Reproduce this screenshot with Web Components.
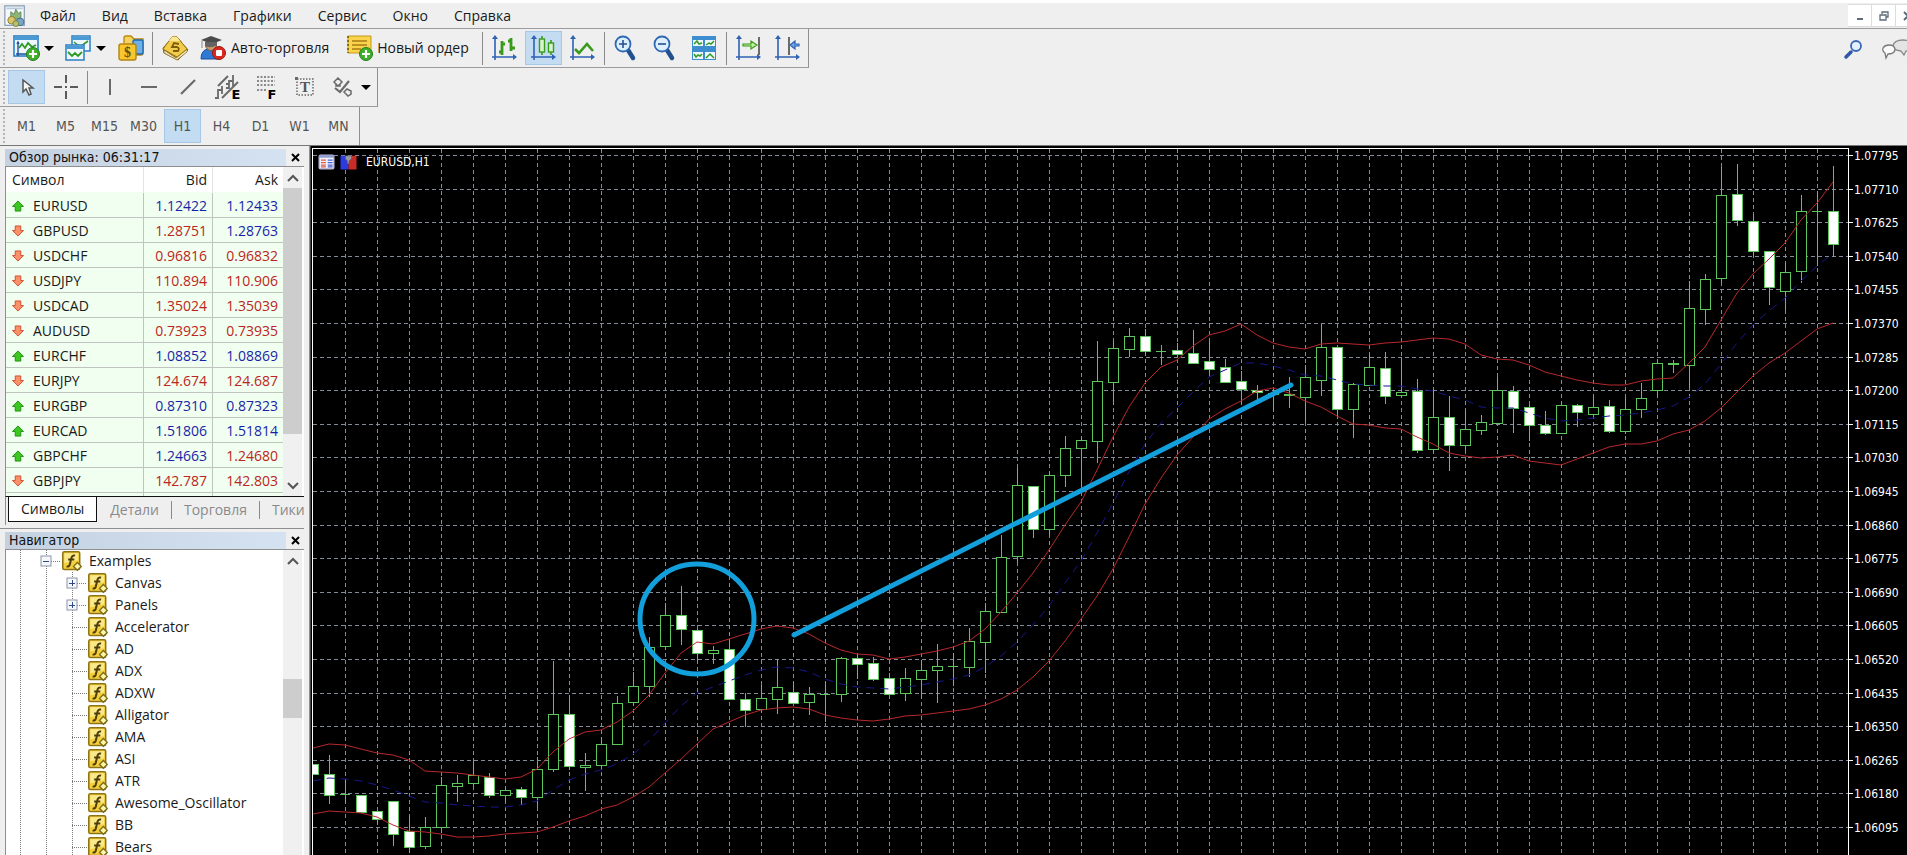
<!DOCTYPE html>
<html lang="ru">
<head>
<meta charset="utf-8">
<title>EURUSD,H1</title>
<style>
  html, body { height: 100%; margin: 0; }
  body {
    overflow: hidden;
    font: 14px/20px "Open Sans", "Noto Sans", sans-serif;
    color: #1a1a1a;
    background: #efefef;
  }
</style>
</head>
<body>
<mt-terminal></mt-terminal>

<script>
const AXES = `
  <path d="M4 3v22M1 22h23" stroke="#2f62b5" stroke-width="1.6" fill="none"/>
  <path d="M4 0l3 4H1zM26 22l-4-3v6z" fill="#2f62b5"/>`;

const PLUS_BADGE = `
  <circle cx="20" cy="19" r="6.5" fill="#3fae2a" stroke="#23801a"/>
  <path d="M20 15v8M16 19h8" stroke="#fff" stroke-width="2.2"/>`;

const ICONS = {
  app: `
    <rect x="1" y="1" width="23" height="23" fill="#f4f8fb" stroke="#8ba0b4" stroke-width="1.5"/>
    <path d="M3 4h19" stroke="#b9cadb" stroke-width="2"/>
    <path d="M8 16V8l4 3 2-6 3 5 3-2v9z" fill="#8db67a" stroke="#5a8450"/>
    <circle cx="9" cy="18" r="4.5" fill="#d8c46a" stroke="#8a7626"/>
    <circle cx="19" cy="20" r="4.5" fill="#7aa4c8" stroke="#3f6689"/>
    <circle cx="14" cy="22" r="3.5" fill="#b2bf74" stroke="#6e7a35"/>`,
  newChart: `
    <rect x="1" y="1" width="24" height="20" fill="#eef7fd" stroke="#2b7fc2" stroke-width="1.6"/>
    <path d="M1 2h24v3H1z" fill="#4a9ad6"/>
    <path d="M5 8v13M3 19h14M4 9l1-2 1 2" stroke="#1d4f9e" stroke-width="1.4" fill="none"/>
    <path d="M6 13l3-4 3 4 3-5 4 4 4-2" stroke="#2f9b24" stroke-width="1.8" fill="none"/>${PLUS_BADGE}`,
  profiles: `
    <rect x="7" y="1" width="18" height="15" fill="#eef7fd" stroke="#2b7fc2" stroke-width="1.5"/>
    <path d="M7 2h18v3H7z" fill="#4a9ad6"/>
    <path d="M9 7l6 5 8-6" stroke="#2f9b24" stroke-width="1.6" fill="none"/>
    <rect x="1" y="10" width="18" height="15" fill="#eef7fd" stroke="#2b7fc2" stroke-width="1.5"/>
    <path d="M1 11h18v3H1z" fill="#4a9ad6"/>
    <path d="M3 17l4 4 3-3 3 3 4-4" stroke="#2f9b24" stroke-width="1.8" fill="none"/>`,
  symbols: `
    <path d="M6 8V3q0-2 2-2h5l3 3h9v14q0 2-2 2h-8" fill="#f5d35e" stroke="#b88a13" stroke-width="1.4"/>
    <rect x="15" y="5" width="10" height="14" rx="1.5" fill="#6bb2ec" stroke="#2268ac" stroke-width="1.4"/>
    <rect x="1" y="9" width="17" height="16" rx="2" fill="#f8c62f" stroke="#b58410" stroke-width="1.4"/>
    <text x="9.5" y="22" font-size="14" font-weight="bold" text-anchor="middle" fill="#6b4f08" font-family="Liberation Serif, serif">$</text>`,
  book: `
    <path d="M1 13L11 2q2-1 4 0l11 13-10 10L2 18z" fill="#a8821c" stroke="#7f5f12"/>
    <path d="M2 15l12 8 11-9v3l-10 8L2 18z" fill="#efe7c6" stroke="#8f7425" stroke-width=".8"/>
    <path d="M1 14L10 2q3-1 5 0l10 12-10 8z" fill="#f2cd4b" stroke="#9c7815"/>
    <path d="M10 2q3-1 5 0l3 4-11 0z" fill="#fbe892"/>
    <path d="M17 9l-5-1-2 4 5 0q3 1 1 4l-5 0" fill="none" stroke="#7d5d0c" stroke-width="1.8"/>`,
  autoTrade: `
    <path d="M1 24q0-9 7-10h6q5 1 6 10z" fill="#2f79d4" stroke="#1c4f9b"/>
    <circle cx="11" cy="10" r="5.5" fill="#c89b6c" stroke="#7b5a38"/>
    <path d="M1 5l10-4 11 4-10 4z" fill="#4b4b4b"/>
    <path d="M5 7v4q6 3 12-1V7" fill="#636363"/>
    <path d="M2 6v7" stroke="#888"/>
    <circle cx="19" cy="18" r="6.5" fill="#d9281f" stroke="#9c1712"/>
    <rect x="16" y="15" width="6" height="6" rx="1" fill="#fff"/>`,
  newOrder: `
    <path d="M2 1h23v17H2z" fill="#f9d34c" stroke="#c69a1c"/>
    <path d="M2 1v17" stroke="#8b6d18" stroke-width="2" stroke-dasharray="2 2"/>
    <path d="M6 6h15M6 10h15M6 14h9" stroke="#a67c14" stroke-width="1.6"/>${PLUS_BADGE}`,
  bars: `${AXES}
    <path d="M11 6v14M8 17h3M11 9h3M20 3v13M17 6h3M20 13h4" stroke="#3a9a1b" stroke-width="2.8"/>`,
  candles: `${AXES}
    <path d="M12 1v19M21 5v15" stroke="#3a9a1b" stroke-width="1.6"/>
    <rect x="9.5" y="4" width="5" height="13" fill="#d6f5cc" stroke="#3a9a1b" stroke-width="1.4"/>
    <rect x="18.5" y="8" width="5" height="9" fill="#d6f5cc" stroke="#3a9a1b" stroke-width="1.4"/>`,
  line: `${AXES}
    <path d="M6 14l4 4 8-9 6 7" stroke="#3a9a1b" stroke-width="2.6" fill="none"/>`,
  zoomIn: `
    <path d="M15 15l5 8" stroke="#24508f" stroke-width="4.5" stroke-linecap="round"/>
    <circle cx="10" cy="9" r="7.5" fill="#dcefff" stroke="#2f68b4" stroke-width="1.8"/>
    <path d="M10 5v8M6 9h8" stroke="#24508f" stroke-width="1.6"/>`,
  zoomOut: `
    <path d="M15 15l5 8" stroke="#24508f" stroke-width="4.5" stroke-linecap="round"/>
    <circle cx="10" cy="9" r="7.5" fill="#dcefff" stroke="#2f68b4" stroke-width="1.8"/>
    <path d="M6 9h8" stroke="#24508f" stroke-width="1.6"/>`,
  tile: `
    <path d="M1 1h24v24H1z" fill="#3c8ed0"/>
    <path d="M2 5h10v6H2zM14 5h10v6H14zM2 17h10v7H2zM14 17h10v7H14z" fill="#eef7fd"/>
    <path d="M3 9l3-3 2 3 3-1M15 10l3-2 2 1 3-3M3 19l2 3 2-2 2 1 2-2M15 23l4-4 4 4" stroke="#2f9b24" stroke-width="1.5" fill="none"/>`,
  autoScroll: `${AXES}
    <path d="M24 2v18" stroke="#333" stroke-width="1.4"/>
    <path d="M8 9h8V6l6 4-6 4v-3H8z" fill="#baf09c" stroke="#3a9a1b" stroke-width="1.2"/>`,
  shift: `${AXES}
    <path d="M15 2v18" stroke="#333" stroke-width="1.4"/>
    <path d="M25 9h-4V6l-5 4 5 4v-3h4z" fill="#6ba5e6" stroke="#2f62b5" stroke-width="1.2"/>`,
  cursor: `
    <path d="M9 6v12l3-3 3 6 2-1-2-6h4z" fill="#f6f6f6" stroke="#555" stroke-width="1.5"/>`,
  crosshair: `
    <path d="M13 1v8M13 17v8M1 13h8M17 13h8M12 13h2" stroke="#5a5a5a" stroke-width="2"/>`,
  vline: `<path d="M13 5v16" stroke="#6a6a6a" stroke-width="2"/>`,
  hline: `<path d="M5 13h16" stroke="#6a6a6a" stroke-width="2"/>`,
  trend: `<path d="M6 20L20 6" stroke="#6a6a6a" stroke-width="2.2"/>`,
  channel: `
    <path d="M4 12L14 2M8 24L24 8" stroke="#6a6a6a" stroke-width="2"/>
    <path d="M1 24h3v-8h4v-4M8 16v4M12 14h3V7h4V1M19 7v5M15 10h-3" stroke="#6a6a6a" stroke-width="1.8" fill="none"/>
    <text x="22" y="25" font-size="13" font-weight="bold" text-anchor="middle" fill="#000" font-family="DejaVu Sans, sans-serif">E</text>`,
  fibo: `
    <path d="M4 3h18M4 7h18M4 11h18M4 16h10" stroke="#6a6a6a" stroke-width="1.5" stroke-dasharray="2 1.5"/>
    <text x="19" y="25" font-size="13" font-weight="bold" text-anchor="middle" fill="#000" font-family="DejaVu Sans, sans-serif">F</text>`,
  text: `
    <rect x="5" y="5" width="16" height="16" fill="none" stroke="#6a6a6a" stroke-width="1.5" stroke-dasharray="1.5 1.5"/>
    <path d="M3 3h3v3H3z" fill="#6a6a6a"/>
    <text x="13" y="18" font-size="15" font-weight="bold" text-anchor="middle" fill="#555" font-family="Liberation Serif, serif">T</text>`,
  shapes: `
    <path d="M4 8l4-4 4 4-4 4zM6 10v2h4v-2" fill="none" stroke="#6a6a6a" stroke-width="1.5"/>
    <path d="M5 14l5 4 9-11" stroke="#6a6a6a" stroke-width="2.2" fill="none"/>
    <path d="M14 18l3-3 4 2v3l-3 2z" fill="none" stroke="#6a6a6a" stroke-width="1.5"/>`,
  search: `
    <path d="M9 16l-5 5" stroke="#2f58a8" stroke-width="3.5" stroke-linecap="round"/>
    <circle cx="14" cy="10" r="5" fill="#e3efff" stroke="#3a66b4" stroke-width="1.8"/>`,
  chat: `
    <path d="M24 15l-2 4-3-4q-8-1-8-5 1-6 10-6t10 6-7 5z" fill="#e4e4e4" stroke="#8a8a8a" stroke-width="1.3"/>
    <path d="M6 18l-2 4-1-5q-3-2-2-5 2-3 6-3 6 0 6 5-1 4-7 4z" fill="#fafafa" stroke="#7a7a7a" stroke-width="1.3"/>`,
  up: `<path d="M13 2l12 12h-6v10H7V14H1z" fill="#3cc81e" stroke="#1f8a12" stroke-width="2"/>`,
  down: `<path d="M13 24L1 12h6V2h12v10h6z" fill="#fa9168" stroke="#d0492c" stroke-width="2"/>`,
  indicator: `
    <rect x="1" y="1" width="22" height="23" rx="2" fill="#f3cf3c" stroke="#8f7417" stroke-width="2"/>
    <path d="M3 3h18v9L3 16z" fill="#fae98a"/>
    <path d="M17 6q-4-1-5 4l-2 8q-1 3-4 2M8 11h8" fill="none" stroke="#4f3d06" stroke-width="2.6"/>
    <path d="M20 15l5 5-5 5-5-5z" fill="#fbf6a8" stroke="#7d6a16" stroke-width="1.8"/>`,
  quotes: `
    <rect x="1" y="2" width="24" height="22" rx="2" fill="#f1f1fb" stroke="#b9b9dd" stroke-width="2"/>
    <path d="M1 2h24v4H1z" fill="#8f9bd0"/>
    <path d="M4 10h8M4 14h8M4 18h8M4 21h8" stroke="#e05a4a" stroke-width="2"/>
    <path d="M15 10h8M15 14h8M15 18h8M15 21h8" stroke="#4a63d0" stroke-width="2"/>`,
  depth: `
    <path d="M0 3h10l3 8v14H0z" fill="#2b3be0"/>
    <path d="M26 3H16l-3 8v14h13z" fill="#c92c28"/>
    <path d="M8 3h10v5l-4 3v5h-3v-5L8 8z" fill="#9a9aa2" stroke="#555"/>`,
};

class MtIcon extends HTMLElement {
  connectedCallback() {
    this.attachShadow({ mode: "open" }).innerHTML = `
      <style>
        :host { display: block; flex: none; width: 26px; height: 26px; }
        svg { display: block; width: 100%; height: 100%; overflow: visible; }
      </style>
      <svg viewBox="0 0 26 26" aria-hidden="true">${ICONS[this.getAttribute("name")]}</svg>`;
  }
}
customElements.define("mt-icon", MtIcon);

class MtMenuBar extends HTMLElement {
  connectedCallback() {
    this.attachShadow({ mode: "open" }).innerHTML = `
      <style>
        :host {
          display: flex;
          justify-content: space-between;
          height: 25px;
          border-top: 3px solid #fff;
          border-bottom: 1px solid #9c9c9c;
        }
        nav { display: flex; align-items: center; padding-left: 4px; }
        mt-icon { width: 22px; height: 22px; margin-right: 4px; }
        button {
          font: inherit; color: inherit;
          background: none; border: 0; padding: 0 10px; margin-right: 6px;
        }
        .window { display: flex; width: 59px; overflow: hidden; }
        .window button {
          flex: none;
          display: grid; place-items: center;
          width: 24px; margin: 1px 0; padding: 0;
          background: #fff; border: 1px solid #dcdcdc; border-left-width: 0;
        }
        .window svg { width: 10px; height: 10px; fill: none; stroke: #5d6b7a; stroke-width: 2; }
      </style>
      <nav>
        <mt-icon name="app"></mt-icon>
        ${["Файл", "Вид", "Вставка", "Графики", "Сервис", "Окно", "Справка"]
          .map((t) => `<button>${t}</button>`).join("")}
      </nav>
      <div class="window">
        <button aria-label="Свернуть"><svg viewBox="0 0 10 10"><path d="M2 8h6"/></svg></button>
        <button aria-label="Восстановить"><svg viewBox="0 0 10 10"><path d="M3 3V1h6v5H7M1 4h6v5H1z" stroke-width="1.3"/></svg></button>
        <button aria-label="Закрыть"><svg viewBox="0 0 10 10"><path d="M1 1l8 8M9 1L1 9"/></svg></button>
      </div>`;
  }
}
customElements.define("mt-menu-bar", MtMenuBar);

class MtToolbar extends HTMLElement {
  connectedCallback() {
    this.attachShadow({ mode: "open" }).innerHTML = `
      <style>
        :host {
          display: flex;
          align-items: center;
          gap: 2px;
          box-sizing: border-box;
          width: max-content;
          height: 39px;
          padding: 0 2px 0 3px;
          border-right: 1px solid #8f8f8f;
          border-bottom: 1px solid #9c9c9c;
        }
        .grip { height: 34px; margin-right: 1px; border-left: 2px dotted #b5b5b5; }
      </style>
      <span class="grip"></span><slot></slot>`;
  }
}
customElements.define("mt-toolbar", MtToolbar);

class MtSeparator extends HTMLElement {
  connectedCallback() {
    this.attachShadow({ mode: "open" }).innerHTML = `
      <style>
        :host { display: block; width: 1px; height: 33px; margin: 0 1px; background: #8a8a8a; }
      </style>`;
  }
}
customElements.define("mt-separator", MtSeparator);

// <mt-tool icon="..." label="..." menu active>caption</mt-tool>
class MtTool extends HTMLElement {
  connectedCallback() {
    const icon = this.getAttribute("icon");
    const caption = this.textContent.trim();
    this.attachShadow({ mode: "open" }).innerHTML = `
      <style>
        :host { display: block; }
        button {
          display: flex; align-items: center; justify-content: center; gap: 5px;
          box-sizing: border-box;
          min-width: 37px; height: 34px; padding: 0 4px;
          font: inherit; color: inherit;
          background: none; border: 1px solid transparent;
        }
        .captioned { padding-right: 9px; }
        :host([active]) button { background: #c3dcf1; border-color: #a6c8e6; }
        .arrow {
          margin-right: -1px;
          border: 5px solid transparent; border-bottom: 0; border-top-color: #000;
        }
      </style>
      <button class="${icon && caption ? "captioned" : ""}"
              aria-label="${this.getAttribute("label") || caption}"
              aria-pressed="${this.hasAttribute("active")}">
        ${icon ? `<mt-icon name="${icon}"></mt-icon>` : ""}
        <slot></slot>
        ${this.hasAttribute("menu") ? `<span class="arrow"></span>` : ""}
      </button>`;
  }
}
customElements.define("mt-tool", MtTool);

class MtPanel extends HTMLElement {
  connectedCallback() {
    this.attachShadow({ mode: "open" }).innerHTML = `
      <style>
        :host { display: flex; flex-direction: column; min-height: 0; }
        header {
          display: flex; align-items: center; flex: none;
          height: 17px; margin-top: 3px;
          font: 14px/17px "DejaVu Sans Condensed", "DejaVu Sans", sans-serif;
        }
        h2 {
          flex: 1; margin: 0; padding-left: 4px;
          font: inherit; color: #111;
          background: linear-gradient(90deg, #c3d1e1, #d5e2f2);
        }
        button { width: 18px; padding: 0; border: 0; background: none; }
        svg { display: block; margin: auto; width: 9px; height: 9px; stroke: #000; stroke-width: 2; }
        .body {
          display: flex; flex: 1; min-height: 0;
          background: #fff;
          border: 1px solid #8f8f8f; border-right: 0; border-bottom: 0;
        }
        .view { flex: 1; min-width: 0; overflow: hidden; }
      </style>
      <header>
        <h2>${this.getAttribute("heading")}</h2>
        <button aria-label="Закрыть"><svg viewBox="0 0 9 9"><path d="M1 1l7 7M8 1L1 8"/></svg></button>
      </header>
      <div class="body">
        <div class="view"><slot></slot></div>
        <slot name="scroll"></slot>
      </div>
      <slot name="footer"></slot>`;
  }
}
customElements.define("mt-panel", MtPanel);

// before / size / after: how the track divides between gap, thumb and gap
class MtScrollbar extends HTMLElement {
  connectedCallback() {
    const part = (n) => this.getAttribute(n);
    this.attachShadow({ mode: "open" }).innerHTML = `
      <style>
        :host {
          display: flex; flex-direction: column; flex: none;
          width: 19px; margin-right: 2px; background: #f0f0f0;
        }
        button { flex: none; height: 21px; padding: 0; border: 0; background: none; }
        svg { display: block; margin: auto; width: 12px; height: 8px; fill: none; stroke: #555; stroke-width: 2; }
        .before { flex: ${part("before")}; }
        .thumb { flex: ${part("size")}; background: #cdcdcd; }
        .after { flex: ${part("after")}; }
      </style>
      <button aria-label="Вверх"><svg viewBox="0 0 12 8"><path d="M1 7l5-5 5 5"/></svg></button>
      <span class="before"></span><span class="thumb"></span><span class="after"></span>
      ${this.hasAttribute("open-end") ? "" : `<button aria-label="Вниз"><svg viewBox="0 0 12 8"><path d="M1 1l5 5 5-5"/></svg></button>`}`;
  }
}
customElements.define("mt-scrollbar", MtScrollbar);

// symbol, bid, ask, symbol direction, bid direction, ask direction
const QUOTES = [
  ["EURUSD", "1.12422", "1.12433", "up", "up", "up"],
  ["GBPUSD", "1.28751", "1.28763", "down", "down", "up"],
  ["USDCHF", "0.96816", "0.96832", "down", "down", "down"],
  ["USDJPY", "110.894", "110.906", "down", "down", "down"],
  ["USDCAD", "1.35024", "1.35039", "down", "down", "down"],
  ["AUDUSD", "0.73923", "0.73935", "down", "down", "down"],
  ["EURCHF", "1.08852", "1.08869", "up", "up", "up"],
  ["EURJPY", "124.674", "124.687", "down", "down", "down"],
  ["EURGBP", "0.87310", "0.87323", "up", "up", "up"],
  ["EURCAD", "1.51806", "1.51814", "up", "up", "up"],
  ["GBPCHF", "1.24663", "1.24680", "up", "up", "down"],
  ["GBPJPY", "142.787", "142.803", "down", "down", "down"],
];

class MtQuotes extends HTMLElement {
  connectedCallback() {
    this.attachShadow({ mode: "open" }).innerHTML = `
      <style>
        :host { display: block; height: 329px; overflow: hidden; background: #f0fff0; }
        table { width: 100%; border-collapse: separate; border-spacing: 0; table-layout: fixed; }
        th, td {
          box-sizing: border-box; height: 25px; padding: 1px 5px 0;
          font-weight: normal; text-align: right; line-height: 20px;
          border-bottom: 1px solid #bfc4bf; border-right: 1px solid #bfc4bf;
        }
        thead th { height: 26px; background: #fff; border-bottom-color: #f0fff0; border-right-color: #e3e3e3; }
        th:first-child { width: 138px; text-align: left; padding-left: 6px; }
        th:nth-child(2) { width: 69px; }
        tr > :last-child { border-right: 0; }
        .symbol { display: flex; align-items: center; gap: 9px; }
        mt-icon { width: 12px; height: 12px; }
        .up { color: #1a1fa8; }
        .down { color: #bd2520; }
      </style>
      <table>
        <thead><tr><th scope="col">Символ</th><th scope="col">Bid</th><th scope="col">Ask</th></tr></thead>
        <tbody>
          ${QUOTES.map(([symbol, bid, ask, dir, bidDir, askDir]) => `
            <tr>
              <th scope="row"><span class="symbol"><mt-icon name="${dir}"></mt-icon>${symbol}</span></th>
              <td class="${bidDir}">${bid}</td>
              <td class="${askDir}">${ask}</td>
            </tr>`).join("")}
          <tr><th></th><td></td><td></td></tr>
        </tbody>
      </table>`;
  }
}
customElements.define("mt-quotes", MtQuotes);

class MtTabs extends HTMLElement {
  connectedCallback() {
    this.attachShadow({ mode: "open" }).innerHTML = `
      <style>
        :host {
          display: flex; flex: none; overflow: hidden;
          height: 28px; padding-left: 2px;
          border-top: 1px solid #111; border-left: 1px solid #8f8f8f;
        }
        button {
          flex: none; display: flex; align-items: center; gap: 12px;
          height: 25px; padding: 0 12px 0 0;
          font: inherit; color: #8a8a8a;
          background: none; border: 0;
        }
        button::before { content: ""; height: 18px; border-left: 1px solid #8a8a8a; }
        button:nth-of-type(2)::before { border-color: transparent; }
        button:last-of-type { padding-right: 0; }
        [aria-selected="true"] {
          padding: 0 12px; color: #1a1a1a;
          background: #fff; border: 1px solid #111; border-top: 0;
        }
        [aria-selected="true"]::before { display: none; }
      </style>
      <button role="tab" aria-selected="true">Символы</button>
      <button role="tab">Детали</button>
      <button role="tab">Торговля</button>
      <button role="tab">Тики</button>`;
  }
}
customElements.define("mt-tabs", MtTabs);

const GUIDES = {
  line: `<path d="M13 0v22"/>`,
  tee: `<path d="M13 0v22M13 11h15"/>`,
  box: `<path d="M13 0v22M18 11h10"/>
        <rect x="8" y="6" width="10" height="10" fill="#f6f7fb" stroke="#8c94a8"/>`,
};
GUIDES.minus = GUIDES.box + `<path class="sign" d="M10 11h6"/>`;
GUIDES.plus = GUIDES.box + `<path class="sign" d="M10 11h6M13 8v6"/>`;

const TREE = [
  ["Examples", "line", "minus"],
  ["Canvas", "line", "line", "plus"],
  ["Panels", "line", "line", "plus"],
  ...["Accelerator", "AD", "ADX", "ADXW", "Alligator", "AMA", "ASI", "ATR", "Awesome_Oscillator", "BB", "Bears"]
    .map((name) => [name, "line", "line", "tee"]),
];

class MtNavigator extends HTMLElement {
  connectedCallback() {
    this.attachShadow({ mode: "open" }).innerHTML = `
      <style>
        :host { display: block; }
        ul { margin: 0; padding: 0 0 0 1px; list-style: none; }
        li { display: flex; align-items: center; height: 22px; white-space: nowrap; }
        svg { flex: none; width: 26px; height: 22px; overflow: visible; }
        path { fill: none; stroke: #7a7a7a; stroke-dasharray: 1 1; shape-rendering: crispEdges; }
        .sign { stroke: #2e4a86; stroke-dasharray: none; }
        mt-icon { width: 20px; height: 20px; margin: 0 7px 0 3px; }
      </style>
      <ul role="tree">
        ${TREE.map(([name, ...guides]) => `
          <li role="treeitem">${guides.map((g) => `<svg viewBox="0 0 26 22">${GUIDES[g]}</svg>`).join("")}<mt-icon name="indicator"></mt-icon>${name}</li>`).join("")}
      </ul>`;
  }
}
customElements.define("mt-navigator", MtNavigator);

const STEP = 16;      // distance between candles
const ROW = 33.6;     // distance between price levels
const TOP_PRICE = 107795;

// high, body top, body bottom, low, bearish
const CANDLES = [
  [615,615,625,625,1],[606,625,646,655,1],[630,645,645,654,0],[646,646,663,664,1],[661,662,670,675,1],
  [652,652,685,697,1],[667,682,698,704,1],[668,678,697,700,0],[628,636,678,684,0],[626,634,637,653,0],
  [612,626,634,637,0],[624,628,646,649,1],[638,641,646,652,0],[638,640,648,656,1],[608,620,648,658,0],
  [512,565,620,623,0],[546,565,617,621,1],[604,616,618,642,0],[588,595,616,621,0],[547,554,595,595,0],
  [523,537,553,556,0],[488,498,537,548,0],[454,466,497,501,0],[437,466,480,496,1],[480,481,504,512,1],
  [497,501,504,515,0],[490,500,550,551,1],[544,550,561,578,1],[536,549,560,563,0],[510,538,550,565,0],
  [533,543,554,555,1],[538,545,553,566,0],[533,545,545,573,0],[508,509,545,553,0],[506,509,515,530,1],
  [508,514,530,532,1],[524,529,545,546,1],[519,529,544,552,0],[511,521,530,549,0],[495,517,521,554,0],
  [504,517,517,537,0],[479,492,518,528,0],[454,462,493,524,0],[386,408,463,463,0],[319,336,407,413,0],
  [337,337,380,389,1],[323,326,380,386,0],[287,299,326,338,0],[288,291,299,338,0],[192,232,292,314,0],
  [192,199,233,256,0],[179,187,200,208,0],[180,187,202,207,1],[196,202,202,216,0],[194,201,205,208,1],
  [181,204,214,214,1],[192,212,220,224,1],[210,218,233,233,1],[222,232,240,255,1],[236,241,243,253,1],
  [240,244,245,262,0],[228,245,246,259,0],[216,228,248,273,0],[175,198,231,247,0],[198,198,260,267,1],
  [234,235,260,289,0],[205,218,236,236,0],[203,219,247,255,1],[209,243,246,248,0],[230,242,301,304,1],
  [240,268,300,304,0],[247,268,296,322,1],[262,280,296,302,0],[266,273,281,286,0],[228,241,274,275,0],
  [237,242,259,284,1],[256,258,276,292,1],[262,276,284,286,1],[253,256,284,285,0],[255,256,263,278,1],
  [247,258,265,266,0],[251,257,282,284,1],[249,260,282,285,0],[234,249,260,269,0],[210,214,241,248,0],
  [211,214,215,224,1],[132,159,216,239,0],[125,130,160,176,0],[18,46,129,134,0],[15,45,71,77,1],
  [65,72,102,108,1],[102,102,138,156,1],[114,123,142,161,0],[46,62,122,134,0],[42,62,62,117,0],
  [17,62,95,108,1],
];

// Bollinger bands, one value per candle; the basis is their mean
const UPPER = [
  599,595,596,600,604,606,611,622,623,624,626,628,630,628,620,603,590,583,581,573,562,546,524,504,493,495,490,
  485,480,477,479,485,494,501,505,506,510,508,505,502,498,492,480,463,444,424,401,376,353,321,288,258,234,218,
  211,197,186,182,175,186,194,198,200,195,194,195,196,194,193,191,189,190,195,206,210,211,216,223,227,231,234,
  236,236,232,230,229,214,198,171,144,125,110,94,71,54,33,
];
const LOWER = [
  665,662,663,664,668,676,682,683,685,688,688,687,685,684,683,678,672,667,660,656,648,638,624,610,595,580,573,
  566,561,559,558,560,566,569,571,572,570,567,566,564,562,560,556,550,541,528,512,492,470,447,420,388,355,329,
  306,288,270,260,252,242,239,244,252,258,267,275,276,279,280,288,295,304,307,309,308,306,312,314,316,310,304,
  298,295,295,292,285,281,272,259,243,227,214,204,192,180,174,
];

const levelY = (k) => Math.round(6 + k * ROW);
const polyline = (values, cls) =>
  `<polyline class="${cls}" points="${values.map((y, i) => `${i * STEP},${y}`).join(" ")}"/>`;

class MtChart extends HTMLElement {
  connectedCallback() {
    const levels = Array.from({ length: 21 }, (_, k) => k);
    const basis = UPPER.map((u, i) => Math.round((u + LOWER[i]) / 2));

    this.attachShadow({ mode: "open" }).innerHTML = `
      <style>
        :host {
          display: flex; min-width: 0; min-height: 0; overflow: hidden;
          background: #000; border-left: 1px solid #444; padding: 2px 0 0 1px;
        }
        .plot {
          position: relative; flex: 1; min-width: 0; overflow: hidden;
          border: 1px solid #fff; border-bottom: 0;
        }
        svg { display: block; width: 100%; height: 100%; overflow: hidden; }
        .grid { stroke: #838b98; stroke-dasharray: 4 3; shape-rendering: crispEdges; }
        .candle { stroke: #5cc65c; fill: #000; shape-rendering: crispEdges; }
        .bear { fill: #fff; }
        polyline { fill: none; }
        .band { stroke: #b8282c; }
        .basis { stroke: #17178c; stroke-dasharray: 8 6; }
        .mark { fill: none; stroke: #129fdb; stroke-width: 5; stroke-linecap: round; }
        .caption {
          position: absolute; left: 4px; top: 5px;
          display: flex; align-items: center; gap: 3px;
          font: 12px/16px "DejaVu Sans Condensed", "DejaVu Sans", sans-serif; color: #fff;
        }
        .caption mt-icon { width: 19px; height: 16px; }
        .caption span { margin-left: 5px; }
        .axis {
          flex: none; width: 58px;
          font: 12px "DejaVu Sans Condensed", "DejaVu Sans", sans-serif;
        }
        .axis text { fill: #fff; }
        .axis path { stroke: #fff; shape-rendering: crispEdges; }
      </style>
      <div class="plot">
        <svg role="img" aria-label="EURUSD,H1">
          <g class="grid">
            ${levels.map((k) => `<line x1="0" x2="100%" y1="${levelY(k)}" y2="${levelY(k)}"/>`).join("")}
            ${Array.from({ length: 47 }, (_, k) => 32 * (k + 1))
              .map((x) => `<line x1="${x}" x2="${x}" y1="0" y2="100%"/>`).join("")}
          </g>
          ${CANDLES.map(([high, top, bottom, low, bear], i) => `
            <g class="candle ${bear ? "bear" : ""}">
              <path d="M${i * STEP} ${high}V${low}"/>
              <path d="M${i * STEP - 5} ${top}h10V${bottom}h-10z"/>
            </g>`).join("")}
          ${polyline(UPPER, "band")}
          ${polyline(basis, "basis")}
          ${polyline(LOWER, "band")}
          <ellipse class="mark" cx="384" cy="470" rx="57" ry="55"/>
          <path class="mark" d="M481 486L978 236"/>
        </svg>
        <div class="caption">
          <mt-icon name="quotes"></mt-icon><mt-icon name="depth"></mt-icon><span>EURUSD,H1</span>
        </div>
      </div>
      <svg class="axis">
        ${levels.map((k) => `
          <path d="M0 ${levelY(k) + 1}h4"/>
          <text x="5" y="${levelY(k) + 6}">${((TOP_PRICE - 85 * k) / 100000).toFixed(5)}</text>`).join("")}
      </svg>`;
  }
}
customElements.define("mt-chart", MtChart);

class MtTerminal extends HTMLElement {
  connectedCallback() {
    this.attachShadow({ mode: "open" }).innerHTML = `
      <style>
        :host { display: flex; flex-direction: column; height: 100vh; }
        .tools { display: flex; justify-content: space-between; }
        .corner { display: flex; align-items: center; gap: 14px; width: 65px; overflow: hidden; }
        .corner button { flex: none; padding: 0; border: 0; background: none; }
        main { flex: 1; display: flex; min-height: 0; margin-top: -1px; border-top: 1px solid #777; }
        aside { flex: none; display: flex; flex-direction: column; width: 304px; padding-right: 5px; border-right: 1px solid #8f8f8f; }
        mt-panel { margin-left: 5px; }
        .navigator { flex: 1; }
        hr { width: 100%; margin: 3px 0 0; border: 0; border-top: 1px solid #8f8f8f; }
        mt-chart { flex: 1; }
        .timeframes { color: #555; font: 14px/20px "DejaVu Sans Condensed", "DejaVu Sans", sans-serif; }
      </style>
      <mt-menu-bar></mt-menu-bar>
      <div class="tools">
        <mt-toolbar>
          <mt-tool icon="newChart" label="Новый график" menu></mt-tool>
          <mt-tool icon="profiles" label="Профили" menu></mt-tool>
          <mt-tool icon="symbols" label="Символы"></mt-tool>
          <mt-separator></mt-separator>
          <mt-tool icon="book" label="Библиотека"></mt-tool>
          <mt-tool icon="autoTrade">Авто-торговля</mt-tool>
          <mt-tool icon="newOrder">Новый ордер</mt-tool>
          <mt-separator></mt-separator>
          <mt-tool icon="bars" label="Бары"></mt-tool>
          <mt-tool icon="candles" label="Свечи" active></mt-tool>
          <mt-tool icon="line" label="Линия"></mt-tool>
          <mt-separator></mt-separator>
          <mt-tool icon="zoomIn" label="Увеличить"></mt-tool>
          <mt-tool icon="zoomOut" label="Уменьшить"></mt-tool>
          <mt-tool icon="tile" label="Плитка"></mt-tool>
          <mt-separator></mt-separator>
          <mt-tool icon="autoScroll" label="Автопрокрутка"></mt-tool>
          <mt-tool icon="shift" label="Сдвиг графика"></mt-tool>
        </mt-toolbar>
        <div class="corner">
          <button aria-label="Поиск"><mt-icon name="search"></mt-icon></button>
          <button aria-label="Чат"><mt-icon name="chat"></mt-icon></button>
        </div>
      </div>
      <mt-toolbar>
        <mt-tool icon="cursor" label="Курсор" active></mt-tool>
        <mt-tool icon="crosshair" label="Перекрестие"></mt-tool>
        <mt-separator></mt-separator>
        <mt-tool icon="vline" label="Вертикальная линия"></mt-tool>
        <mt-tool icon="hline" label="Горизонтальная линия"></mt-tool>
        <mt-tool icon="trend" label="Трендовая линия"></mt-tool>
        <mt-tool icon="channel" label="Канал"></mt-tool>
        <mt-tool icon="fibo" label="Фибоначчи"></mt-tool>
        <mt-tool icon="text" label="Текст"></mt-tool>
        <mt-tool icon="shapes" label="Объекты" menu></mt-tool>
      </mt-toolbar>
      <mt-toolbar class="timeframes">
        ${["M1", "M5", "M15", "M30", "H1", "H4", "D1", "W1", "MN"]
          .map((t) => `<mt-tool ${t === "H1" ? "active" : ""}>${t}</mt-tool>`).join("")}
      </mt-toolbar>
      <main>
        <aside>
          <mt-panel heading="Обзор рынка: 06:31:17">
            <mt-quotes></mt-quotes>
            <mt-scrollbar slot="scroll" before="0" size="246" after="41"></mt-scrollbar>
            <mt-tabs slot="footer"></mt-tabs>
          </mt-panel>
          <hr>
          <mt-panel class="navigator" heading="Навигатор">
            <mt-navigator></mt-navigator>
            <mt-scrollbar slot="scroll" before="108" size="39" after="137" open-end></mt-scrollbar>
          </mt-panel>
        </aside>
        <mt-chart></mt-chart>
      </main>`;
  }
}
customElements.define("mt-terminal", MtTerminal);
</script>
</body>
</html>
